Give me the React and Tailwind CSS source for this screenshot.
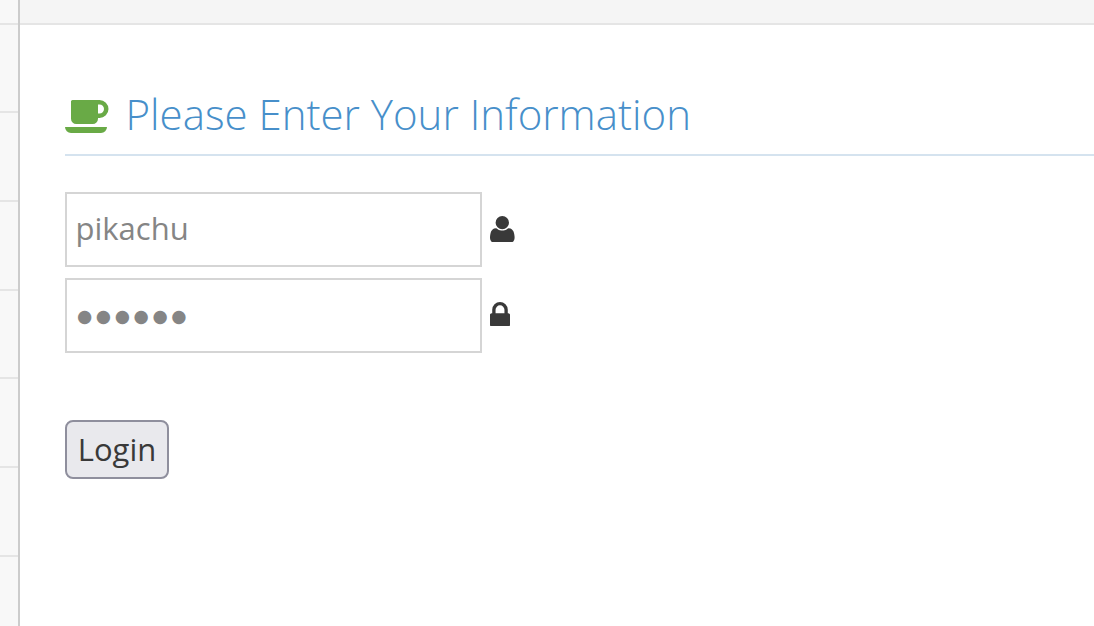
const dividers = [0, 1, 2, 3, 4, 5];

function CoffeeIcon() {
  return (
    <svg className="mb-[10px] block h-[33px] w-[43.5px] shrink-0 fill-[#69aa46]" viewBox="0 192 1856 1408" preserveAspectRatio="none">
      <path d="M1664 576q0-80-56-136t-136-56h-64v384h64q80 0 136-56t56-136zm-1664 768h1792q0 106-75 181t-181 75h-1280q-106 0-181-75t-75-181zm1856-768q0 159-112.5 271.5t-271.5 112.5h-64v32q0 92-66 158t-158 66h-704q-92 0-158-66t-66-158v-736q0-26 19-45t45-19h1152q159 0 271.5 112.5t112.5 271.5z" />
    </svg>
  );
}

function UserIcon() {
  return (
    <svg className="mb-[1.4px] ml-2 block h-[26.6px] w-[24.6px] fill-[#393939]" viewBox="192 128 1408 1536" preserveAspectRatio="none">
      <path d="M1600 1405q0 120-73 189.5t-194 69.5h-874q-121 0-194-69.5t-73-189.5q0-53 3.5-103.5t14-109 26.5-108.5 43-97.5 62-81 85.5-53.5 111.5-20q9 0 42 21.5t74.5 48 108 48 133.5 21.5 133.5-21.5 108-48 74.5-48 42-21.5q61 0 111.5 20t85.5 53.5 62 81 43 97.5 26.5 108.5 14 109 3.5 103.5zm-320-893q0 159-112.5 271.5t-271.5 112.5-271.5-112.5-112.5-271.5 112.5-271.5 271.5-112.5 271.5 112.5 112.5 271.5z" />
    </svg>
  );
}

function LockIcon() {
  return (
    <svg className="mb-[3px] ml-2 block h-[24.6px] w-5 fill-[#393939]" viewBox="192 128 1152 1408" preserveAspectRatio="none">
      <path d="M512 768h512v-192q0-106-75-181t-181-75-181 75-75 181v192zm832 96v576q0 40-28 68t-68 28h-960q-40 0-68-28t-28-68v-576q0-40 28-68t68-28h32v-192q0-184 132-316t316-132 316 132 132 316v192h32q40 0 68 28t28 68z" />
    </svg>
  );
}

export default function App() {
  return (
    <div className="flex h-[626px] w-full overflow-hidden bg-white font-['Open_Sans',sans-serif]">
      <aside className="w-5 shrink-0 border-r-2 border-[#cccccc] bg-[#f8f8f8]">
        <div className="h-[24.55px] border-b-2 border-[#e5e5e5]" />
        {dividers.map((n) => (
          <div key={n} className="h-[88.7px] border-b-2 border-[#e5e5e5]" />
        ))}
      </aside>
      <main className="min-w-0 flex-1">
        <div className="h-[25px] border-b-2 border-[#e5e5e5] bg-[#f5f5f5]" />
        <div className="pl-[45px]">
          <h4 className="mt-[49px] flex h-[82px] items-center border-b-2 border-[#d5e3ef] pt-4 pb-[1px] text-[42px] leading-[60px] font-light text-[#478fca]">
            <CoffeeIcon />
            <span className="mb-4 ml-[17px] whitespace-nowrap">Please Enter Your Information</span>
          </h4>
          <form onSubmit={(e) => e.preventDefault()}>
            <label className="mt-9 flex items-center">
              <input type="text" defaultValue="pikachu" className="h-[75px] w-[417px] border-2 border-[#d5d5d5] bg-white px-[8.5px] pb-[3px] text-[31px] text-[#858585] outline-none" />
              <UserIcon />
            </label>
            <label className="mt-[11px] flex items-center">
              <input type="text" defaultValue="●●●●●●" className="h-[75px] w-[417px] border-2 border-[#d5d5d5] bg-white px-[10px] font-['DejaVu_Sans',sans-serif] text-[17.5px] tracking-[3.6px] text-[#858585] outline-none" />
              <LockIcon />
            </label>
            <button className="mt-[67px] flex h-[59px] w-[104px] items-center justify-center rounded-lg border-2 border-[#8f8f9d] bg-[#e9e9ed] text-[31px] text-[#393939]">
              Login
            </button>
          </form>
        </div>
      </main>
    </div>
  );
}
